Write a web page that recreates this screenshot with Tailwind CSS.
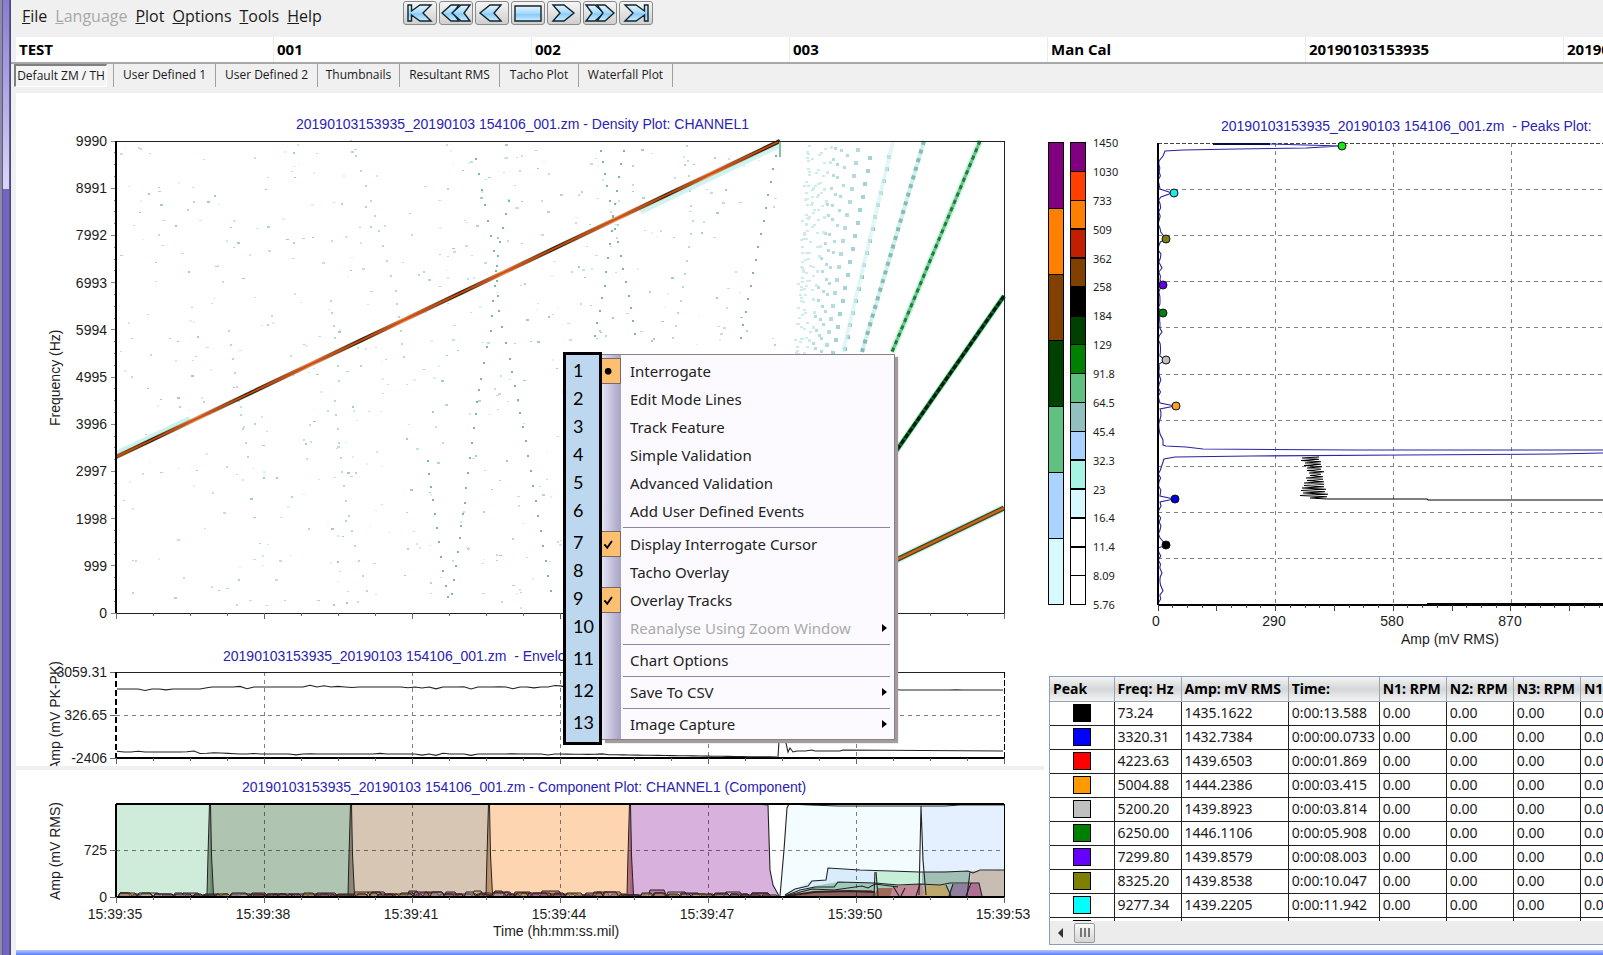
<!DOCTYPE html>
<html lang="en">
<head>
    <meta charset="UTF-8">
    <meta name="viewport" content="width=device-width, initial-scale=1.0">
    <title>ZoomMod Analysis</title>
    <script src="https://cdn.jsdelivr.net/npm/@tailwindcss/browser@4"></script>
</head>
<body class="bg-[#f0f0f0] text-[#1a1a1a] font-['Open_Sans',sans-serif]">
<div class="relative flex min-h-screen overflow-hidden">

    <!-- Window frame -->
    <div class="w-[11px] shrink-0 flex flex-col border-l-2 border-[#8c8ca4] border-r border-r-[#4c4684]">
        <div class="h-[189px] border-x border-[#5f578f] bg-linear-to-b from-[#8a7ccc] to-[#dcd7f6]"></div>
        <div class="flex-1 border-x border-[#5f578f] bg-[#7464c2]"></div>
    </div>

    <div class="flex-1 min-w-0 flex flex-col">
        <!-- Menu bar -->
        <header class="h-[37px] flex items-start pl-[11px]">
            <nav class="flex gap-2 pt-1 w-[381px] text-[16px] leading-6">
                <button type="button"><u>F</u>ile</button>
                <button type="button" disabled class="text-[#a8a8a8]"><u>L</u>anguage</button>
                <button type="button"><u>P</u>lot</button>
                <button type="button"><u>O</u>ptions</button>
                <button type="button"><u>T</u>ools</button>
                <button type="button"><u>H</u>elp</button>
            </nav>
            <svg width="0" height="0" class="absolute">
                <defs>
                    <linearGradient id="ice" x1="0" y1="0" x2="0" y2="1">
                        <stop offset="0" stop-color="#e8f6ff"/><stop offset=".5" stop-color="#a4d8fa"/><stop offset=".55" stop-color="#86cbf8"/><stop offset="1" stop-color="#d0ecff"/>
                    </linearGradient>
                </defs>
            </svg>
            <div class="flex gap-[2px] pt-px">
                <button type="button" aria-label="First" class="w-[34px] h-6 rounded-[3px] border border-[#8a8a8a] bg-linear-to-b from-[#f6f6f6] to-[#cfcfcf]">
                    <svg viewBox="0 0 32 22" class="w-full h-full" fill="url(#ice)" stroke="#10242c" stroke-width="1.4"><path d="M4 3h3.500v6L16 3h11l-8 8 8 8H16l-8.500-6v6H4z"/></svg>
                </button>
                <button type="button" aria-label="Fast back" class="w-[34px] h-6 rounded-[3px] border border-[#8a8a8a] bg-linear-to-b from-[#f6f6f6] to-[#cfcfcf]">
                    <svg viewBox="0 0 32 22" class="w-full h-full" fill="url(#ice)" stroke="#10242c" stroke-width="1.4"><path d="M2 11l9-8h8l-6 8 6 8h-8z"/><path d="M12 11l9-8h9l-6 8 6 8h-9z"/></svg>
                </button>
                <button type="button" aria-label="Back" class="w-[34px] h-6 rounded-[3px] border border-[#8a8a8a] bg-linear-to-b from-[#f6f6f6] to-[#cfcfcf]">
                    <svg viewBox="0 0 32 22" class="w-full h-full" fill="url(#ice)" stroke="#10242c" stroke-width="1.4"><path d="M4 11l10-8h11l-7 8 7 8H14z"/></svg>
                </button>
                <button type="button" aria-label="Stop" class="w-[34px] h-6 rounded-[3px] border border-[#8a8a8a] bg-linear-to-b from-[#f6f6f6] to-[#cfcfcf]">
                    <svg viewBox="0 0 32 22" class="w-full h-full" fill="url(#ice)" stroke="#10242c" stroke-width="1.4"><path d="M3 4h26v15H3z"/></svg>
                </button>
                <button type="button" aria-label="Forward" class="w-[34px] h-6 rounded-[3px] border border-[#8a8a8a] bg-linear-to-b from-[#f6f6f6] to-[#cfcfcf]">
                    <svg viewBox="0 0 32 22" class="w-full h-full" fill="url(#ice)" stroke="#10242c" stroke-width="1.4"><path d="M26 11L16 3H5l7 8-7 8h11z"/></svg>
                </button>
                <button type="button" aria-label="Fast forward" class="w-[34px] h-6 rounded-[3px] border border-[#8a8a8a] bg-linear-to-b from-[#f6f6f6] to-[#cfcfcf]">
                    <svg viewBox="0 0 32 22" class="w-full h-full" fill="url(#ice)" stroke="#10242c" stroke-width="1.4"><path d="M20 11l-9-8H2l6 8-6 8h9z"/><path d="M30 11l-9-8h-8l6 8-6 8h8z"/></svg>
                </button>
                <button type="button" aria-label="Last" class="w-[34px] h-6 rounded-[3px] border border-[#8a8a8a] bg-linear-to-b from-[#f6f6f6] to-[#cfcfcf]">
                    <svg viewBox="0 0 32 22" class="w-full h-full" fill="url(#ice)" stroke="#10242c" stroke-width="1.4"><path d="M28 3h-3.500v6L16 3H5l8 8-8 8h11l8.500-6v6H28z"/></svg>
                </button>
            </div>
        </header>

        <!-- Session columns -->
        <div class="border-b-2 border-[#a8a8a8]">
            <div class="ml-[5px] h-[25px] flex overflow-hidden bg-white text-[15px] leading-6 font-bold text-black">
                <div class="w-[258px] shrink-0 pl-[3px] border-r border-[#ececec]">TEST</div>
                <div class="w-[258px] shrink-0 pl-[3px] border-r border-[#ececec]">001</div>
                <div class="w-[258px] shrink-0 pl-[3px] border-r border-[#ececec]">002</div>
                <div class="w-[258px] shrink-0 pl-[3px] border-r border-[#ececec]">003</div>
                <div class="w-[258px] shrink-0 pl-[3px] border-r border-[#ececec]">Man Cal</div>
                <div class="w-[258px] shrink-0 pl-[3px] border-r border-[#ececec]">20190103153935</div>
                <div class="w-[258px] shrink-0 pl-[3px] border-r border-[#ececec]">20190103153935</div>
            </div>
        </div>

        <!-- Tabs -->
        <div role="tablist" class="h-[29px] flex items-start pl-[3px] text-[12px] leading-5 whitespace-nowrap">
            <button type="button" role="tab" aria-selected="true" class="w-[93px] h-[23px] border-t-2 border-l-2 border-[#808080] border-r border-b border-r-white border-b-white bg-[#f5f5f5]">Default ZM / TH</button>
            <button type="button" role="tab" class="ml-[6px] w-[102px] h-[23px] pb-[2px] border-l border-[#a0a0a0]">User Defined 1</button>
            <button type="button" role="tab" class="w-[102px] h-[23px] pb-[2px] border-l border-[#a0a0a0]">User Defined 2</button>
            <button type="button" role="tab" class="w-[82px] h-[23px] pb-[2px] border-l border-[#a0a0a0]">Thumbnails</button>
            <button type="button" role="tab" class="w-[100px] h-[23px] pb-[2px] border-l border-[#a0a0a0]">Resultant RMS</button>
            <button type="button" role="tab" class="w-[79px] h-[23px] pb-[2px] border-l border-[#a0a0a0]">Tacho Plot</button>
            <button type="button" role="tab" class="w-[95px] h-[23px] pb-[2px] border-x border-[#a0a0a0]">Waterfall Plot</button>
        </div>

        <!-- Plots -->
        <main class="ml-[5px] flex-1 flex bg-white">
            <div class="flex-[1028] min-w-0">
                <svg id="density" viewBox="16 93 1028 540" class="block w-full font-['Liberation_Sans',Arial,sans-serif] text-[14px]"></svg>
                <svg id="envelope" viewBox="16 633 1028 133" class="block w-full font-['Liberation_Sans',Arial,sans-serif] text-[14px]"></svg>
                <div class="h-1 bg-[#f0f0f0]"></div>
                <svg id="component" viewBox="16 770 1028 180" class="block w-full font-['Liberation_Sans',Arial,sans-serif] text-[14px]"></svg>
            </div>

            <div class="flex-[559] min-w-0">
                <svg id="peaks" viewBox="1044 93 559 583" class="block w-full font-['Liberation_Sans',Arial,sans-serif] text-[14px]"></svg>

                <!-- Peak table -->
                <div class="ml-[5px] border border-r-0 border-[#8ba0b8] overflow-hidden font-['Noto_Sans',sans-serif] text-[14px] leading-5">
                    <div class="h-[244px] overflow-hidden">
                        <table class="w-[598px] table-fixed border-collapse text-left">
                            <thead>
                                <tr class="h-6 bg-linear-to-b from-[#f4f4f4] via-[#d4d6d8] to-[#f4f4f4] font-bold text-black whitespace-nowrap">
                                    <th class="w-[64px] px-[3px] border-r border-b border-[#9aa4b0]">Peak</th>
                                    <th class="w-[67px] px-[3px] border-r border-b border-[#9aa4b0]">Freq: Hz</th>
                                    <th class="w-[107px] px-[3px] border-r border-b border-[#9aa4b0]">Amp: mV RMS</th>
                                    <th class="w-[91px] px-[3px] border-r border-b border-[#9aa4b0]">Time:</th>
                                    <th class="w-[67px] px-[3px] border-r border-b border-[#9aa4b0]">N1: RPM</th>
                                    <th class="w-[67px] px-[3px] border-r border-b border-[#9aa4b0]">N2: RPM</th>
                                    <th class="w-[67px] px-[3px] border-r border-b border-[#9aa4b0]">N3: RPM</th>
                                    <th class="w-[67px] px-[3px] border-r border-b border-[#9aa4b0]">N1</th>
                                </tr>
                            </thead>
                            <tbody id="peakRows"></tbody>
                        </table>
                    </div>
                    <div class="h-[23px] bg-[#ececec] flex items-center">
                        <button type="button" aria-label="Scroll left" class="w-6 flex justify-center pr-1">
                            <svg viewBox="0 0 5 10" class="w-[5px] h-[10px]"><path d="M5 0v10L0 5z" fill="#333"/></svg>
                        </button>
                        <button type="button" aria-label="Scroll thumb" class="w-[21px] h-5 rounded-[2px] border border-[#999] bg-linear-to-b from-[#fafafa] to-[#d4d4d4] flex items-center justify-center gap-[2px]">
                            <span class="w-[2px] h-[9px] bg-[#777]"></span><span class="w-[2px] h-[9px] bg-[#777]"></span><span class="w-[2px] h-[9px] bg-[#777]"></span>
                        </button>
                    </div>
                </div>
            </div>
        </main>
        <div class="ml-[5px] h-[5px] bg-linear-to-b from-[#b4c8fc] to-[#5c7cf4]"></div>
    </div>

    <!-- Context menu with numbered callouts -->
    <div class="absolute left-[563px] top-[352px] flex items-start">
        <ol class="w-[39px] h-[393px] border-[3px] border-black bg-[#bdd7ee] pl-[7px] pt-px font-['Lato',sans-serif] text-[18px] leading-7 text-black">
            <li>1</li>
            <li>2</li>
            <li>3</li>
            <li>4</li>
            <li>5</li>
            <li class="mb-1">6</li>
            <li>7</li>
            <li>8</li>
            <li>9</li>
            <li class="mb-1">10</li>
            <li class="mb-1">11</li>
            <li class="mb-1">12</li>
            <li>13</li>
        </ol>
        <div class="mt-[2px] w-[293px] border border-l-0 border-[#8c8088] bg-[#fcfaff] shadow-[3px_3px_1px_#a49c9c] font-['Noto_Sans',sans-serif] text-[15px] leading-7 text-[#222]">
            <div role="menu" class="bg-linear-to-r from-[#e4e2f2] to-[#a6a2c4] bg-[length:19px_100%] bg-no-repeat pt-[2px] pb-px flex flex-col">
                <button type="button" role="menuitemradio" aria-checked="true" class="h-7 flex items-center text-left">
                    <span class="w-[19px] h-[26px] mr-[9px] border border-l-0 border-[#77686c] bg-[#fdc070] flex items-center"><svg viewBox="0 0 19 24" class="w-[19px]"><circle cx="6.500" cy="12" r="3.500"/></svg></span>Interrogate
                </button>
                <button type="button" role="menuitem" class="h-7 pl-7 text-left">Edit Mode Lines</button>
                <button type="button" role="menuitem" class="h-7 pl-7 text-left">Track Feature</button>
                <button type="button" role="menuitem" class="h-7 pl-7 text-left">Simple Validation</button>
                <button type="button" role="menuitem" class="h-7 pl-7 text-left">Advanced Validation</button>
                <button type="button" role="menuitem" class="h-7 pl-7 text-left">Add User Defined Events</button>
                <hr class="ml-[21px] mr-1 mt-[2px] mb-[2px] border-[#8a86a8]">
                <button type="button" role="menuitemcheckbox" aria-checked="true" class="h-7 flex items-center text-left">
                    <span class="w-[19px] h-[26px] mr-[9px] border border-l-0 border-[#77686c] bg-[#fdc070] flex items-center"><svg viewBox="0 0 19 24" class="w-[19px]"><path d="M2.500 12l3 3.500 5-7" fill="none" stroke="#000" stroke-width="2"/></svg></span>Display Interrogate Cursor
                </button>
                <button type="button" role="menuitem" class="h-7 pl-7 text-left">Tacho Overlay</button>
                <button type="button" role="menuitemcheckbox" aria-checked="true" class="h-7 flex items-center text-left">
                    <span class="w-[19px] h-[26px] mr-[9px] border border-l-0 border-[#77686c] bg-[#fdc070] flex items-center"><svg viewBox="0 0 19 24" class="w-[19px]"><path d="M2.500 12l3 3.500 5-7" fill="none" stroke="#000" stroke-width="2"/></svg></span>Overlay Tracks
                </button>
                <button type="button" role="menuitem" disabled class="h-7 pl-7 pr-[7px] flex items-center justify-between text-[#a9a9ab]">Reanalyse Using Zoom Window
                    <svg viewBox="0 0 5 8" class="w-[5px] h-2"><path d="M0 0l5 4-5 4z" fill="#000"/></svg>
                </button>
                <hr class="ml-[21px] mr-1 mt-[2px] mb-px border-[#8a86a8]">
                <button type="button" role="menuitem" class="h-7 pl-7 text-left">Chart Options</button>
                <hr class="ml-[21px] mr-1 mt-[2px] mb-px border-[#8a86a8]">
                <button type="button" role="menuitem" class="h-7 pl-7 pr-[7px] flex items-center justify-between">Save To CSV
                    <svg viewBox="0 0 5 8" class="w-[5px] h-2"><path d="M0 0l5 4-5 4z"/></svg>
                </button>
                <hr class="ml-[21px] mr-1 mt-[2px] mb-px border-[#8a86a8]">
                <button type="button" role="menuitem" class="h-7 pl-7 pr-[7px] flex items-center justify-between">Image Capture
                    <svg viewBox="0 0 5 8" class="w-[5px] h-2"><path d="M0 0l5 4-5 4z"/></svg>
                </button>
            </div>
        </div>
    </div>
</div>

<script>
// seeded so the noise looks the same on every load
let seed = 11;
const rnd = () => (seed = (seed * 16807) % 2147483647) / 2147483647;

const line = (x1, y1, x2, y2, extra = 'stroke="#222"') =>
    `<path d="M${x1} ${y1}L${x2} ${y2}" shape-rendering="crispEdges" fill="none" ${extra}/>`;
const text = (x, y, s, extra = 'fill="#1c1c1c"') => `<text x="${x}" y="${y}" ${extra} xml:space="preserve">${s}</text>`;
const title = (x, y, s) => text(x, y, s, 'fill="#2a22b4"');
const side = (y, s) => `<text transform="translate(60 ${y}) rotate(-90)" fill="#1c1c1c">${s}</text>`;
const poly = (pts, extra) => `<polyline points="${pts}" ${extra}/>`;
const GRID = 'stroke="#808080" stroke-dasharray="4 4"';
const L = 116, R = 1004;

function timeTicks(y) {
    let out = '';
    for (let i = 0; i <= 24; i++) out += line(L + i * 37, y, L + i * 37, y + (i % 4 ? 3 : 6), 'stroke="#666"');
    return out;
}

// ---- density plot ----
function drawDensity() {
    const T = 141, B = 613;
    let s = title(296, 129, '20190103153935_20190103 154106_001.zm - Density Plot: CHANNEL1') + side(426, 'Frequency (Hz)');
    const labels = ['9990', '8991', '7992', '6993', '5994', '4995', '3996', '2997', '1998', '999', '0'];
    labels.forEach((t, i) => s += text(107, T + i * 47.2 + 5, t, 'fill="#1c1c1c" text-anchor="end"'));
    for (let i = 0; i <= 40; i++) s += line(i % 4 ? 114 : 111, T + i * 11.8, 116, T + i * 11.8, 'stroke="#888"');

    const tones = ['#cdeaea', '#c2e2e2', '#b4d6d2', '#dcf3f3', '#a6cdc4', '#ccd8e6'];
    for (let i = 0; i < 620; i++) {
        const x = 120 + rnd() * 655, y = 144 + rnd() * 465;
        s += `<rect x="${x | 0}" y="${y | 0}" width="${rnd() < .3 ? 3 : 2}" height="${rnd() < .5 ? 1 : 2}" fill="${tones[rnd() * 6 | 0]}"/>`;
    }
    const trails = [
        [475, 158, 487, 220, 496, 265, 498, 310, 509, 358, 525, 440, 540, 530, 553, 606],
        [508, 200, 497, 255, 490, 330, 480, 378, 475, 413, 464, 502, 459, 537, 449, 608],
        [427, 460, 434, 513, 445, 585, 449, 608],
        [600, 150, 606, 185, 612, 215, 620, 255, 628, 295, 637, 346],
        [623, 150, 616, 190, 611, 230, 604, 285, 592, 348],
        [775, 155, 763, 220, 750, 285, 738, 350],
        [330, 300, 336, 350, 339, 395], [334, 400, 345, 500, 358, 560, 371, 606],
        [228, 330, 238, 400, 250, 470], [686, 145, 692, 220, 680, 300, 670, 350],
        [350, 140, 370, 200, 395, 290, 405, 370]
    ];
    trails.forEach((t, n) => {
        for (let i = 0; i + 3 < t.length; i += 2) {
            const steps = Math.round((t[i + 3] - t[i + 1]) / 14) || 1;
            for (let k = 0; k < steps; k++) {
                const x = t[i] + (t[i + 2] - t[i]) * k / steps, y = t[i + 1] + (t[i + 3] - t[i + 1]) * k / steps;
                s += `<rect x="${x | 0}" y="${y | 0}" width="2" height="2" fill="${n < 6 ? '#7db8a4' : '#b8d9d6'}"/>`;
            }
        }
    });

    // odd harmonics fan out from x=784
    for (let k = 9; k <= 43; k += 2) {
        const gap = k < 10 ? 12 : k < 15 ? 13 : 14;
        for (let h = 468 - rnd() * 12; h > 255; h -= gap) {
            const x = 784 + h / (.48 * k) + (k > 13 ? rnd() * 3 - 1 : 0);
            if (x < 796 || (k > 21 && rnd() < .35)) continue;
            const w = k < 15 ? 4 : 3;
            const c = k === 9 ? '#8dc4c4' : k < 13 ? '#a3d3d6' : k < 21 ? '#b5dde0' : '#cfebec';
            const y = B - h + (k > 13 ? rnd() * 4 - 2 : 0);
            s += `<rect x="${x - w / 2 | 0}" y="${y | 0}" width="${w}" height="${k < 15 ? 4 : k < 23 ? 3 : 2}" fill="${c}"/>`;
        }
    }
    s += poly('924,141 862,352', 'fill="none" stroke="#c4ecea" stroke-width="4" opacity=".8"');
    s += poly('924,141 862,352', 'fill="none" stroke="#86bcb6" stroke-width="4" stroke-dasharray="4 5"');
    s += poly('893,141 843,352', 'fill="none" stroke="#d6f2f2" stroke-width="4" opacity=".7"');
    s += poly('980,141 892,352', 'fill="none" stroke="#b4ecd0" stroke-width="6" opacity=".7"');
    s += poly('980,141 892,352', 'fill="none" stroke="#6cc08a" stroke-width="3"');
    s += poly('980,141 892,352', 'fill="none" stroke="#1a8038" stroke-width="3" stroke-dasharray="4 4"');
    s += poly('1004,296 892,457', 'fill="none" stroke="#a8ecc8" stroke-width="6" opacity=".7"');
    s += poly('1004,296 892,457', 'fill="none" stroke="#0c6a2c" stroke-width="4"');
    s += poly('1004,296 892,457', 'fill="none" stroke="#021c0a" stroke-width="3" stroke-dasharray="5 2"');
    s += poly('1004,508 892,562', 'fill="none" stroke="#b4f0e0" stroke-width="8" opacity=".7"');
    s += poly('1004,508 892,562', 'fill="none" stroke="#3a4a18" stroke-width="5"');
    s += poly('1004,508 892,562', 'fill="none" stroke="#d8601c" stroke-width="2.4"');

    // swept sine, dark where the amplitude peaks
    const dark = [153, 250, 361, 461, 555, 667, 763], hot = [195, 311, 403, 503, 617, 710];
    const stops = [[116, '#8a5a20']].concat(dark.map(x => [x, '#1c1a0c']), hot.map(x => [x, '#f08850'])).sort((a, b) => a[0] - b[0]);
    s += '<defs><linearGradient id="sweep" gradientUnits="userSpaceOnUse" x1="116" x2="780">' +
        stops.map(([x, c]) => `<stop offset="${(x - 116) / 664}" stop-color="${c}"/>`).join('') + '</linearGradient></defs>';
    s += poly('116,454 190,419', 'fill="none" stroke="#bfeee6" stroke-width="6" opacity=".8"');
    s += poly('640,211 780,144', 'fill="none" stroke="#bfeee6" stroke-width="7" opacity=".7"');
    s += poly('116,457 780,141', 'fill="none" stroke="#4f9a58" stroke-width="5" opacity=".25"');
    s += poly('116,457 780,141', 'fill="none" stroke="url(#sweep)" stroke-width="4"');
    s += poly('116,457 780,141', 'fill="none" stroke="#d4480c" stroke-width="1.8"');
    s += line(780, 141, 780, 157, 'stroke="#7cc8a0" stroke-width="2"');

    s += `<rect x="${L}" y="${T}" width="${R - L}" height="${B - T}" fill="none" stroke="#222" shape-rendering="crispEdges"/>`;
    s += line(116, T, 116, B, 'stroke="#000" stroke-width="2"') + timeTicks(B);
    document.getElementById('density').innerHTML = s;
}

// ---- envelope plot ----
function wobble(pts, amp) {
    const out = [];
    for (let i = 0; i + 3 < pts.length; i += 2) {
        for (let x = pts[i]; x < pts[i + 2]; x += 7) {
            const y = pts[i + 1] + (pts[i + 3] - pts[i + 1]) * (x - pts[i]) / (pts[i + 2] - pts[i]);
            out.push(`${x},${(y + (rnd() < .3 ? (rnd() - .5) * amp : 0)).toFixed(1)}`);
        }
    }
    out.push(`${pts[pts.length - 2]},${pts[pts.length - 1]}`);
    return out.join(' ');
}

function drawEnvelope() {
    const T = 672, B = 758;
    let s = side(770, 'Amp (mV PK-PK)') + title(223, 661, '20190103153935_20190103 154106_001.zm  - Envelope Plot: CHANNEL1');
    [['3059.31', T], ['326.65', 715], ['-2406', B]].forEach(([t, y]) => s += text(107, y + 5, t, 'fill="#1c1c1c" text-anchor="end"') + line(110, y, 116, y, 'stroke="#666"'));
    for (let i = 1; i < 6; i++) s += line(L + i * 148, T, L + i * 148, B, GRID);
    s += line(L, 715, R, 715, GRID);
    s += line(L, T, R, T) + line(L, B, R, B, 'stroke="#000" stroke-width="2"');
    s += line(L, T, L, B, 'stroke="#000" stroke-width="2" stroke-dasharray="6 3"') + line(R, T, R, B, 'stroke="#000" stroke-dasharray="6 2"');
    s += poly(wobble([117, 689, 200, 689, 212, 687, 560, 687, 900, 690, 1003, 690], 4), 'fill="none" stroke="#222" stroke-width="1.1"');
    s += poly(wobble([117, 752, 200, 752, 240, 754, 560, 754, 700, 756, 777, 757], 3), 'fill="none" stroke="#222" stroke-width="1.1"');
    s += poly('778,757 780,725 783,741 786,743 788,752 790,748 793,752 797,751 805,751 812,750 815,751 840,751 843,750 1003,751', 'fill="none" stroke="#222" stroke-width="1.1"');
    s += timeTicks(B);
    document.getElementById('envelope').innerHTML = s;
}

// ---- component plot ----
function drawComponent() {
    const T = 804, B = 897;
    let s = side(900, 'Amp (mV RMS)') + title(242, 792, '20190103153935_20190103 154106_001.zm - Component Plot: CHANNEL1 (Component)');
    const area = (pts, fill) => `<polygon points="${pts}" fill="${fill}"/>`;
    s += area('116,804 210,804 210,897 116,897', '#cfebd9');
    s += area('210,804 351,804 351,897 210,897', '#b0c4b2');
    s += area('351,804 489,804 489,897 351,897', '#d8c6b5');
    s += area('489,804 630,804 630,897 489,897', '#fdd5b0');
    s += area('630,804 768,805 770,870 773,885 779,897 630,897', '#d8b2dc');
    s += area('780,897 784,850 788,805 860,806 922,806 922,897', '#f3fdff');
    s += area('922,806 1004,806 1004,897 922,897', '#e4f0ff');
    s += area('785,895 810,881 826,880 828,868 875,871 875,897', '#d9ecfb');
    s += area('875,871 922,872 922,897 875,897', '#c6eed8');
    s += area('922,872 969,871 972,897 922,897', '#a2bfb6');
    s += area('969,897 971,871 1004,870 1004,897', '#c9bcb2');
    s += area('785,897 815,886 838,882 875,883 898,885 898,897', '#9fc9b8');
    s += area('790,897 820,891 872,890 876,897', '#8d6060');
    s += area('873,897 878,888 893,888 897,897', '#a06a58');
    s += area('890,897 893,886 922,884 925,897', '#c08894');
    s += area('922,897 926,885 946,885 950,897', '#bca86c');
    s += area('948,897 953,884 968,884 972,897', '#8f7f9c');
    s += area('967,897 971,883 979,883 982,897', '#b07096');
    for (let i = 1; i < 6; i++) s += line(L + i * 148, T, L + i * 148, B, 'stroke="#000" stroke-opacity=".5" stroke-dasharray="4 4"');
    s += line(L, 850, R, 850, 'stroke="#000" stroke-opacity=".5" stroke-dasharray="4 4"');

    // overlapping low level humps along the base line
    const humps = ['#8a4a84', '#b08a40', '#6a2c30', '#c8a860', '#9a90a8', '#703850'];
    for (let layer = 0; layer < 3; layer++) {
        for (let x = 118; x < 762;) {
            const w = 8 + rnd() * 14, h = 2 + rnd() * (x < 340 ? 2 : layer ? 3 : 5);
            const c = humps[rnd() * 6 | 0];
            s += `<path d="M${x.toFixed(0)} 897l2 -${h.toFixed(0)}h${(w - 4).toFixed(0)}l3 ${h.toFixed(0)}" fill="${c}" fill-opacity=".4" stroke="#2a1c1c" stroke-width="1"/>`;
            x += w;
        }
    }
    [[210, '#47684a'], [351, '#6b5a48'], [489, '#a06a38'], [630, '#8c3050']].forEach(([x, c]) =>
        s += `<path d="M${x - 3} 895l1 -40 1.500 -51h1l1 51 2 40z" fill="${c}" fill-opacity=".6" stroke="#222" stroke-width="1"/>`);
    const thin = 'fill="none" stroke="#222" stroke-width="1.1"';
    s += poly('630,804 758,804 768,805 770,870 773,885 779,896', thin);
    s += poly('780,896 784,850 787,808 789,804 810,805 838,806 945,806 960,805 1004,805', thin);
    s += poly('919,895 921,806 923,860 926,895', thin);
    s += poly('785,895 795,889 808,886 812,881 826,880 828,868 860,870 890,871 919,872 945,872 968,871 973,873 980,870 1004,870', thin);
    s += poly('785,896 800,890 815,887 834,887 838,882 875,883 898,885 920,884 940,885 950,883 979,883 982,896', thin);
    s += poly('785,896 812,889 834,890 862,886 868,888 875,884 898,887', thin);
    s += poly('788,896 814,892 850,891 875,892', 'fill="none" stroke="#3c2020" stroke-width="2"');
    ['875,872 874,896', '876,872 878,896', '893,886 899,896', '905,888 901,896', '946,885 951,896', '953,884 949,896', '970,872 967,896', '971,883 966,896', '920,884 916,896']
        .forEach(p => s += poly(p, thin));

    s += line(L, T, R, T, 'stroke="#000" stroke-width="2"') + line(R, T, R, B, 'stroke="#000"');
    s += line(L, T, L, B, 'stroke="#000" stroke-width="2"') + line(L, B, R, B, 'stroke="#000" stroke-width="2"');
    [['725', 850], ['0', B]].forEach(([t, y]) => s += text(107, y + 5, t, 'fill="#1c1c1c" text-anchor="end"') + line(110, y, 116, y, 'stroke="#666"'));
    s += timeTicks(B);
    ['35', '38', '41', '44', '47', '50', '53'].forEach((t, i) => s += text(115 + i * 148, 919, '15:39:' + t, 'fill="#1c1c1c" text-anchor="middle"'));
    s += text(493, 936, 'Time (hh:mm:ss.mil)');
    document.getElementById('component').innerHTML = s;
}

// ---- colour scales and peaks plot ----
function drawPeaks() {
    let s = '';
    const coarse = ['#800080', '#ff8000', '#804000', '#004000', '#60c080', '#aad4ff', '#d8f8ff'];
    coarse.forEach((c, i) => s += `<rect x="1048.500" y="${142.500 + i * 66}" width="15" height="66" fill="${c}" stroke="#000" shape-rendering="crispEdges"/>`);
    const fine = ['#800080', '#ff4000', '#ff8000', '#c02000', '#804000', '#000000', '#004000', '#008000', '#60c080', '#90c0c0', '#aad4ff', '#a8f4e4', '#d8f8ff', '#ffffff', '#ffffff', '#ffffff'];
    fine.forEach((c, i) => s += `<rect x="1070.500" y="${142.500 + i * 28.875}" width="15" height="28.875" fill="${c}" stroke="#000" stroke-width="1.500" shape-rendering="crispEdges"/>`);
    const scale = ['1450', '1030', '733', '509', '362', '258', '184', '129', '91.8', '64.5', '45.4', '32.3', '23', '16.4', '11.4', '8.09', '5.76'];
    scale.forEach((t, i) => s += text(1093, 147 + i * 28.875, t, `fill="#1c1c1c" font-family="Noto Sans" font-size="11"`));

    const X = 1158, T = 143, B = 605;
    s += title(1221, 131, '20190103153935_20190103 154106_001.zm  - Peaks Plot:');
    for (let i = 1; i < 10; i++) s += line(X, T + i * 46.2, 1603, T + i * 46.2, GRID);
    for (let i = 1; i < 4; i++) s += line(X + i * 117.7, T, X + i * 117.7, B, GRID);
    s += line(X, T, 1603, T, 'stroke="#444" stroke-dasharray="4 2"');

    const noise = (y1, y2) => {
        let p = '';
        for (let y = y1; y < y2; y += 4) p += `${(1158 + rnd() * 3).toFixed(1)},${y} `;
        return p;
    };
    const blue = 'fill="none" stroke="#2a24a8" stroke-width="1.1"';
    s += poly('1213,144 1270,144 1341,146 1306,148 1237,149 1183,150 1165,151 1163,156 1159,161 ' + noise(164, 188) + '1160,189 1172,193 1161,197 ' +
        noise(200, 236) + '1166,239 ' + noise(242, 266) + '1162,268 ' + noise(272, 284) + '1163,285 ' + noise(288, 312) + '1163,313 ' + noise(316, 330) + '1162,332 ' +
        noise(336, 357) + '1166,360 ' + noise(364, 402) + '1160,403 1175,406 1160,409 ' + noise(412, 430) + '1160,434 1163,440 1163,445 1166,446 1186,447 1203,449 1356,450 1603,450', blue);
    s += poly('1603,453 1555,454 1402,455 1251,456 1175,457 1164,459 1161,468 ' + noise(470, 493) + '1160,496 1174,499 1160,502 ' + noise(506, 542) + '1166,545 ' +
        noise(548, 572) + '1162,573 ' + noise(577, 588) + '1163,591 ' + noise(595, 604), blue);
    s += line(1213, 144, 1270, 144, 'stroke="#0a0a50" stroke-width="2"');
    s += line(1158, T, 1158, B, 'stroke="#000" stroke-width="2"');

    // tacho trace
    let z = '1319,457 ';
    for (let i = 0; i < 32; i++) {
        const y = 458 + i * 1.25, sway = Math.abs(i - 13) / 18;
        z += i % 2 ? `${(1318 + i / 4 + rnd() * 3).toFixed(0)},${y} ` : `${(1307 - sway * 10 + rnd() * 4).toFixed(0)},${y} `;
    }
    s += poly(z + '1310,498 1327,499 1427,499 1428,500 1603,500', 'fill="none" stroke="#000" stroke-width="1.2"');

    s += line(X, B, 1603, B, 'stroke="#000" stroke-width="2"') + line(1427, B - 1, 1603, B - 1, 'stroke="#000" stroke-width="2"');
    for (let i = 0; i < 31; i++) s += line(X + i * 14.7, B, X + i * 14.7, B + (i % 4 ? 3 : 6), 'stroke="#444"');
    ['0', '290', '580', '870'].forEach((t, i) => s += text(1156 + i * 118, 626, t, 'fill="#1c1c1c" text-anchor="middle"'));
    s += text(1401, 644, 'Amp (mV RMS)');
    [[1342, 146, '#18e818'], [1174, 193, '#20e8e8'], [1166, 239, '#808010'], [1163, 285, '#6000e0'], [1163, 313, '#088010'], [1166, 360, '#c0c0c0'], [1176, 406, '#f8a020'], [1175, 499, '#0000d8'], [1166, 545, '#000']]
        .forEach(([x, y, c]) => s += `<circle cx="${x}" cy="${y}" r="4" fill="${c}" stroke="#111"/>`);
    document.getElementById('peaks').innerHTML = s;
}

const peaks = [
    ['#000000', '73.24', '1435.1622', '0:00:13.588'],
    ['#0000ff', '3320.31', '1432.7384', '0:00:00.0733'],
    ['#ff0000', '4223.63', '1439.6503', '0:00:01.869'],
    ['#ff9900', '5004.88', '1444.2386', '0:00:03.415'],
    ['#c0c0c0', '5200.20', '1439.8923', '0:00:03.814'],
    ['#008000', '6250.00', '1446.1106', '0:00:05.908'],
    ['#6600ff', '7299.80', '1439.8579', '0:00:08.003'],
    ['#808000', '8325.20', '1439.8538', '0:00:10.047'],
    ['#00ffff', '9277.34', '1439.2205', '0:00:11.942'],
    ['#00ff00', '', '', '']
];
document.getElementById('peakRows').innerHTML = peaks.map(([color, ...vals]) => {
    const rpm = vals[0] ? '0.00' : '';
    return `<tr class="h-6"><td class="border-r border-b border-[#222]"><div class="mx-auto w-[18px] h-[18px] border border-black" style="background-color: ${color}"></div></td>` +
        [...vals, rpm, rpm, rpm, rpm].map(v => `<td class="px-[3px] border-r border-b border-[#222]">${v}</td>`).join('') + '</tr>';
}).join('');

drawDensity();
drawEnvelope();
drawComponent();
drawPeaks();
</script>
</body>
</html>
